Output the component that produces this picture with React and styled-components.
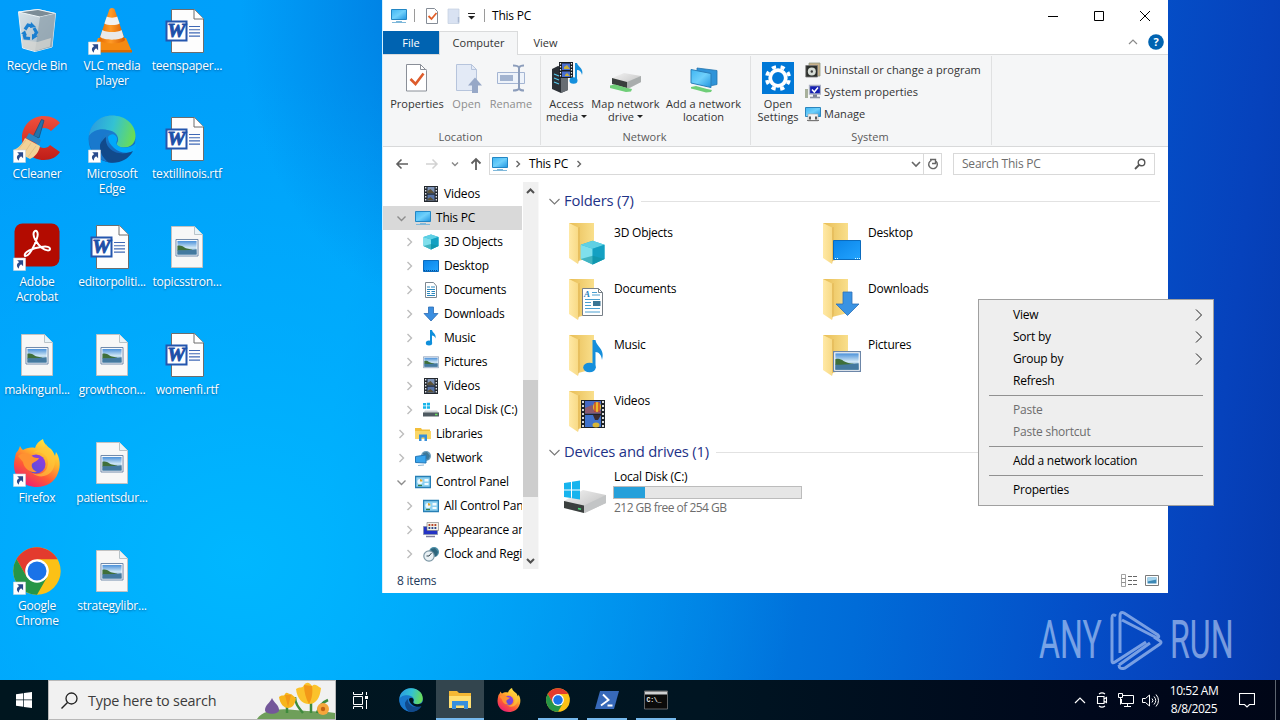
import styled, { createGlobalStyle, css } from "styled-components"

const GlobalStyle = createGlobalStyle`
  * { box-sizing: border-box; }
  body {
    margin: 0;
    overflow: hidden;
    font-family: "Open Sans", "Noto Sans", sans-serif;
    font-size: 12px;
    letter-spacing: -.22px;
    color: #000;
  }
  svg { display: block; flex: none; }
`;

const Screen = styled.div`
  position: relative;
  display: flex;
  flex-direction: column;
  width: 1280px;
  height: 720px;
  overflow: hidden;
  background:
    radial-gradient(ellipse 190px 300px at 430px 0, rgba(0,95,205,.6), rgba(0,110,220,0) 100%),
    radial-gradient(ellipse 560px 480px at 240px 560px, rgba(0,184,255,.95), rgba(0,180,255,.55) 45%, rgba(0,170,255,0) 100%),
    linear-gradient(97deg, #009dfa 0%, #00a2fa 28%, #008bea 45%, #006cd8 68%, #044fc8 84%, #0642bc 93%, #0539ad 100%);
`;
const Desktop = styled.main`
  flex: 1;
  display: flex;
  min-height: 0;
`;

/* desktop shortcuts */
const IconGrid = styled.section`
  display: grid;
  grid-template-rows: repeat(6, 108px);
  grid-auto-columns: 75px;
  grid-auto-flow: column;
  align-content: start;
  width: 383px;
  margin-left: -1px;
`;
const Shortcut = styled.div`
  display: flex;
  flex-direction: column;
  align-items: center;
  padding-top: 7px;
`;
const ShortcutLabel = styled.span`
  margin-top: 3px;
  line-height: 15px;
  width: 75px;
  padding-left: 1px;
  text-align: center;
  color: #fff;
  text-shadow: 0 1px 2px rgba(0,40,90,.55);
`;

/* explorer window */
const Window = styled.section`
  display: flex;
  flex-direction: column;
  width: 786px;
  height: 593px;
  background: #fff;
  border-left: 1px solid #d5f0fd;
`;
const TitleBar = styled.header`
  display: flex;
  align-items: center;
  height: 31px;
  padding-left: 8px;
`;
const QuickSep = styled.i`
  width: 1px;
  height: 13px;
  background: #9a9a9a;
  margin: 0 ${(props) => props.$after}px 0 ${(props) => props.$before}px;
`;
const TitleText = styled.span`
  flex: 1;
`;
const Caption = styled.button`
  display: flex;
  align-items: center;
  justify-content: center;
  width: 46px;
  height: 30px;
  padding: 0 1px 0 0;
  border: 0;
  background: none;
`;
const TabRow = styled.nav`
  display: flex;
  height: 24px;
  border-bottom: 1px solid #dadbdc;
  font-size: 11px;
  letter-spacing: 0;
`;
const Tab = styled.span`
  display: flex;
  align-items: center;
  justify-content: center;
  width: ${(props) => props.$w}px;
  height: 24px;
  padding-bottom: 1px;
  color: #333;
  ${(props) => props.$file && css`
    background: #0063b1;
    color: #fff;
    height: 23px;
    padding-bottom: 0;
  `}
  ${(props) => props.$active && css`
    background: #f5f6f7;
    border: 1px solid #dadbdc;
    border-bottom: 0;
    padding-bottom: 2px;
  `}
`;
const TabTools = styled.div`
  margin-left: auto;
  display: flex;
  align-items: center;
  gap: 10px;
  padding: 0 4px 2px 0;
`;
const Ribbon = styled.div`
  display: flex;
  height: 92px;
  background: #f5f6f7;
  border-bottom: 1px solid #d8d9da;
  font-size: 11px;
  letter-spacing: .05px;
  color: #333;
`;
const Group = styled.div`
  display: flex;
  flex-direction: column;
  width: ${(props) => props.$w}px;
  height: 89px;
  margin-top: 1px;
  padding: 6px 0 0 ${(props) => props.$pad}px;
  border-right: 1px solid #e0e1e2;
`;
const GroupBody = styled.div`
  display: flex;
  height: 68px;
`;
const GroupName = styled.span`
  line-height: 14px;
  text-align: center;
  color: #5a5a5a;
  margin-left: -${(props) => props.$pad + 2}px;
`;
const BigButton = styled.div`
  display: flex;
  flex-direction: column;
  align-items: center;
  width: ${(props) => props.$w}px;
  line-height: 13px;
  text-align: center;
  white-space: nowrap;
  color: ${(props) => (props.$off ? "#8d8d8d" : "#333")};
  svg { margin-bottom: 3px; }
`;
const SmallList = styled.div`
  margin: -3px 0 0 4px;
`;
const SmallButton = styled.div`
  display: flex;
  align-items: center;
  gap: 3px;
  height: 22px;
  padding-bottom: 1px;
  white-space: nowrap;
`;
const AddressRow = styled.div`
  display: flex;
  align-items: center;
  height: 35px;
  padding: 0 13px 1px 12px;
`;
const NavIcons = styled.div`
  display: flex;
  align-items: center;
  width: 94px;
`;
const AddressBox = styled.div`
  display: flex;
  align-items: center;
  width: 453px;
  height: 22px;
  padding-left: 2px;
  border: 1px solid #d9d9d9;
  span { margin: 0 7px; padding-bottom: 1px; }
`;
const Refresh = styled.div`
  display: flex;
  align-items: center;
  justify-content: center;
  width: 18px;
  height: 20px;
  border-left: 1px solid #d9d9d9;
`;
const SearchBox = styled.div`
  display: flex;
  align-items: center;
  justify-content: space-between;
  width: 202px;
  height: 22px;
  margin-left: 11px;
  padding: 0 8px 1px 8px;
  border: 1px solid #d9d9d9;
  color: #6d6d6d;
`;
const Body = styled.div`
  display: flex;
  height: 387px;
`;
const Tree = styled.ul`
  width: 139px;
  margin: 0;
  padding: 0;
  overflow: hidden;
  list-style: none;
`;
const TreeRow = styled.li`
  display: flex;
  align-items: center;
  height: 24px;
  padding-left: ${(props) => (props.$level ? 21 : 13)}px;
  white-space: nowrap;
  background: ${(props) => (props.$selected ? "#d9d9d9" : "none")};
  > svg:nth-child(2) { margin: 0 5px 0 9px; }
  > span { padding-bottom: 1px; }
`;
const ScrollTrack = styled.div`
  display: flex;
  flex-direction: column;
  align-items: center;
  width: 16px;
  margin-left: 1px;
  background: #f0f0f0;
  border-right: 1px solid #f8f8f8;
`;
const Thumb = styled.div`
  width: 15px;
  height: 117px;
  margin: 180px 0 58px;
  background: #cdcdcd;
`;
const Content = styled.div`
  flex: 1;
  padding: 8px 8px 0 10px;
`;
const SectionHead = styled.h2`
  display: flex;
  align-items: center;
  gap: 4px;
  height: 22px;
  margin: 0;
  font-size: 14.8px;
  letter-spacing: -.2px;
  font-weight: 400;
  color: #1e3287;
  white-space: nowrap;
  > span { padding-bottom: 2px; }
  &::after {
    content: "";
    flex: 1;
    height: 1px;
    margin-left: 3px;
    background: #e2e2e2;
  }
`;
const Tiles = styled.div`
  display: grid;
  grid-template-columns: 254px 254px;
  grid-auto-rows: 56px;
  padding: 7px 0 0 14px;
  margin-bottom: -2px;
`;
const Tile = styled.div`
  display: flex;
  gap: 3px;
  line-height: 16px;
  > span { margin-top: 6px; }
`;
const DriveInfo = styled.div`
  width: 189px;
  margin: -1px 0 0 -1px;
  p { margin: 0 1px; }
  p:last-child {
    color: #6d6d6d;
    letter-spacing: -.52px;
  }
`;
const Meter = styled.div`
  height: 13px;
  margin: 1px 0 1px;
  border: 1px solid #bcbcbc;
  background: #e6e6e6;
`;
const MeterFill = styled.div`
  height: 11px;
  background: #26a0da;
`;
const StatusBar = styled.footer`
  display: flex;
  align-items: center;
  height: 23px;
  padding: 0 9px 0 14px;
  color: #1e395b;
  gap: 8px;
  > span { flex: 1; }
`;

/* context menu */
const Menu = styled.div`
  position: absolute;
  left: 978px;
  top: 299px;
  width: 236px;
  padding: 4px 2px;
  background: #eee;
  border: 1px solid #a0a0a0;
`;
const MenuItem = styled.div`
  display: flex;
  align-items: center;
  justify-content: space-between;
  height: 22px;
  padding: 0 5px 0 32px;
  color: ${(props) => (props.$off ? "#6d6d6d" : "#000")};
  > span { padding-bottom: 1px; }
`;
const MenuLine = styled.hr`
  height: 1px;
  margin: 3px 8px;
  border: 0;
  background: #919191;
`;

/* watermark */
const Watermark = styled.div`
  position: absolute;
  left: 1039px;
  top: 608px;
  display: flex;
  align-items: center;
  height: 64px;
  opacity: .55;
  color: #d6e6ff;
`;
const Letters = styled.span`
  width: ${(props) => props.$w}px;
  font: 400 54px/66px Roboto, sans-serif;
  letter-spacing: 0;
  transform: scaleX(.595);
  transform-origin: 0 50%;
`;

/* taskbar */
const Taskbar = styled.footer`
  display: flex;
  height: 40px;
  background: linear-gradient(90deg, #00161f 0%, #001522 55%, #00081c 85%, #000617 100%);
  color: #fff;
`;
const Start = styled.div`
  display: flex;
  align-items: center;
  justify-content: center;
  width: 48px;
`;
const TaskSearch = styled.div`
  display: flex;
  align-items: center;
  width: 288px;
  border: 1px solid #b8b8b8;
  background: #f1f1f1;
  padding-left: 12px;
  overflow: hidden;
  color: #3c3c3c;
  font-size: 14.4px;
  > span { flex: 1; margin-left: 10px; white-space: nowrap; }
`;
const TaskApp = styled.div`
  display: flex;
  align-items: center;
  justify-content: center;
  width: 48px;
  margin-right: 1px;
  &:nth-child(3) { margin-right: 3px; }
  ${(props) => props.$running && css`
    background: linear-gradient(#76b9ed, #76b9ed) bottom / 40px 2px no-repeat;
  `}
  ${(props) => props.$active && css`
    background: linear-gradient(#76b9ed, #76b9ed) bottom / 48px 2px no-repeat, #33454e;
  `}
`;
const Tray = styled.div`
  display: flex;
  align-items: center;
  gap: 8px;
  margin-left: auto;
`;
const Clock = styled.time`
  width: 54px;
  margin: 0 10px 0 0;
  line-height: 18px;
  text-align: center;
  white-space: nowrap;
  font-size: 12px;
  letter-spacing: -.45px;
`;
const ShowDesktop = styled.i`
  width: 5px;
  height: 40px;
  margin-left: 12px;
  border-left: 1px solid #5d6570;
`;

const Svg = ({ s = 48, w = s, h = s, box = "0 0 48 48", children }) => (
  <svg width={w} height={h} viewBox={box} fill="none">{children}</svg>
)

const Gradients = () => (
  <svg width="0" height="0" style={{ position: "absolute" }}>
    <defs>
      <linearGradient id="screen" x1="0" y1="0" x2="1" y2="1">
        <stop offset="0" stopColor="#3fb5f2" /><stop offset=".5" stopColor="#6fd0fb" /><stop offset="1" stopColor="#1f94e0" />
      </linearGradient>
      <linearGradient id="desk" x1="0" y1="0" x2="1" y2="1">
        <stop offset="0" stopColor="#0a84e8" /><stop offset="1" stopColor="#22a4ff" />
      </linearGradient>
      <linearGradient id="folderBack" x1="0" y1="0" x2="1" y2="0">
        <stop offset="0" stopColor="#e8bd55" /><stop offset="1" stopColor="#f9df8c" />
      </linearGradient>
      <linearGradient id="folderFront" x1="0" y1="0" x2="1" y2="0">
        <stop offset="0" stopColor="#ffe9a6" /><stop offset="1" stopColor="#f8da86" />
      </linearGradient>
      <linearGradient id="sky" x1="0" y1="0" x2="0" y2="1">
        <stop offset="0" stopColor="#4a90d9" /><stop offset=".5" stopColor="#cfe6f5" /><stop offset="1" stopColor="#4d86ad" />
      </linearGradient>
      <linearGradient id="cone" x1="0" y1="0" x2="1" y2="0">
        <stop offset="0" stopColor="#e66a00" /><stop offset=".45" stopColor="#ff9a26" /><stop offset="1" stopColor="#d85c00" />
      </linearGradient>
      <linearGradient id="edgeGreen" x1="0" y1=".3" x2="1" y2=".5">
        <stop offset="0" stopColor="#2b9be0" /><stop offset=".5" stopColor="#33c2d3" /><stop offset="1" stopColor="#6bdd54" />
      </linearGradient>
      <linearGradient id="edgeBlue" x1="0" y1="0" x2="0" y2="1">
        <stop offset="0" stopColor="#2590d8" /><stop offset="1" stopColor="#0f5cb5" />
      </linearGradient>
      <linearGradient id="fox" x1=".8" y1="0" x2=".2" y2="1">
        <stop offset="0" stopColor="#fff04a" /><stop offset=".35" stopColor="#ffb52c" /><stop offset=".65" stopColor="#ff5a36" /><stop offset="1" stopColor="#e8177c" />
      </linearGradient>
      <linearGradient id="globe" x1="0" y1="1" x2="1" y2="0">
        <stop offset="0" stopColor="#4757d8" /><stop offset="1" stopColor="#9c37e0" />
      </linearGradient>
      <linearGradient id="bin" x1="0" y1="0" x2="1" y2="1">
        <stop offset="0" stopColor="#d9e4ea" /><stop offset="1" stopColor="#9fb0bb" />
      </linearGradient>
      <linearGradient id="ccred" x1="0" y1="0" x2="0" y2="1">
        <stop offset="0" stopColor="#f0503c" /><stop offset="1" stopColor="#c01d18" />
      </linearGradient>
      <linearGradient id="driveTop" x1="0" y1="0" x2="1" y2="1">
        <stop offset="0" stopColor="#f4f4f4" /><stop offset="1" stopColor="#b9b9b9" />
      </linearGradient>
    </defs>
  </svg>
)

const LinkArrow = () => (
  <g>
    <path d="M.5 35h12v12.500H.5z" fill="#fff" stroke="#c9d3dc" strokeWidth=".6" />
    <path d="M4.2 37.3h5.9v5.9l-2-2c-1.8 1.2-2.3 2.6-2.2 4.6-2.8-2.300-2.500-5 .3-6.500z" fill="#2b4b8c" />
  </g>
)
const Scene = ({ x, y, w, h }) => (
  <g transform={`translate(${x} ${y}) scale(${w / 24} ${h / 18})`}>
    <path d="M.5.5h23v17H.5z" fill="#fff" stroke="#6c86a8" />
    <path d="M2 2h20v14H2z" fill="url(#sky)" />
    <path d="M2 7c3-1 5 0 7 1.500s6 2 9 2.500l-4 1H2z" fill="#3f6f3a" />
    <path d="M2 11.500c5 .5 12 0 20-1V16H2z" fill="#44799f" />
  </g>
)

const RecycleBin = () => (
  <Svg>
    <path d="M5.500 5 25 2.500l17.500 4L39 40 22 44.500 9.500 41z" fill="url(#bin)" stroke="#e9f1f5" strokeWidth="1" />
    <path d="M5.500 5 25 2.500l17.500 4L27 10z" fill="#7c8c96" stroke="#eef5f8" />
    <path d="M27 10 42.500 6.500 39 40 22 44.500z" fill="#8fa2ae" fillOpacity=".75" />
    <path d="M8.500 33l16 2L38 31l-1 8.500-15 4.500-12-3.500z" fill="#e0ddd5" fillOpacity=".65" />
    <g stroke="#1b7fd0" strokeWidth="3.200">
      <path d="M12 22.500l3-4.500 4 1" /><path d="M21 21l2.500 4.500-2.500 4" /><path d="M17 31.500l-5-.5-1-4" />
    </g>
    <path d="M18 15l5 5-6 1zM25 29l-6 4v-6zM8 26.500l4-3 2 5z" fill="#1b7fd0" />
  </Svg>
)
const Vlc = () => (
  <Svg>
    <path d="M10 31h28l6 14H5z" fill="#f58a12" />
    <path d="M5 43h39v2.500H5z" fill="#d96a00" />
    <path d="M21.500 2q2.500-2 5 0L37 33c-3 4.500-23 4.500-26 0z" fill="url(#cone)" />
    <path d="M18.800 9.500c2 1.500 8.400 1.500 10.400 0l2.400 7c-3 2-12.200 2-15.200 0z" fill="#f1f1f1" />
    <path d="M14.400 23c4 2.800 15.200 2.800 19.200 0l2.200 7c-4 3.500-19.600 3.500-23.600 0z" fill="#e9e9e9" />
    <LinkArrow />
  </Svg>
)
const WordDoc = () => (
  <Svg>
    <path d="M8.500 2.500h23L40.500 12v33.500h-32z" fill="#fdfdfd" stroke="#6d6d6d" />
    <path d="M31 2.500V12h9.500" fill="#fff" stroke="#6d6d6d" />
    <path d="M26 19.500h11M26 22.700h11M26 25.900h11M26 29.100h11" stroke="#3f68b5" strokeWidth="1.100" />
    <path d="M3.500 14.500h20v19h-20z" fill="#fff" stroke="#2456ae" strokeWidth="2" />
    <text x="4.200" y="30" fontFamily="Liberation Serif, serif" fontSize="18" fontWeight="700" fontStyle="italic" fill="#1e4fa8" stroke="#1e4fa8" strokeWidth=".8" textLength="18" lengthAdjust="spacingAndGlyphs">W</text>
  </Svg>
)
const ImageDoc = () => (
  <Svg>
    <path d="M8.500 3.500h23l8 8v33h-31z" fill="#f7f7f7" stroke="#c2c2c2" />
    <path d="M31.500 3.500v8h8" fill="#e8f3f8" stroke="#b9c3c8" />
    <Scene x={12.500} y={16} w={23} h={17.500} />
  </Svg>
)
const CCleaner = () => (
  <Svg>
    <path d="M47 8C44 4 38 1 31 1 18 1 9 11 9 23s9 22 22 22c7 0 13-3 16-8l-10-7c-1 2-4 3-6 3-5 0-9-4-9-10s4-10 9-10c3 0 5 1 7 3z" fill="url(#ccred)" />
    <path d="M28.500 4.500 31 5.500 26 23 20.500 21z" fill="#2373ab" stroke="#1c4f7c" strokeWidth=".8" />
    <path d="M16 18l12 7-2 5-13-7z" fill="#2d86c4" />
    <path d="M12 23 27 31c-1 6-5 11-10 13L0 35c6-2 9-6 12-12z" fill="#f2d297" />
    <path d="M13 25 4 36M18 28l-8 12M23 31l-8 11" stroke="#e0bd80" strokeWidth=".8" />
    <LinkArrow />
  </Svg>
)
const EdgeArt = () => (
  <g>
    <circle cx="24" cy="24" r="23.500" fill="url(#edgeBlue)" />
    <path d="M1 21C2 9 12 .5 24 .5 37 .5 47.500 9 47.500 21c0 7-5 11.500-11.500 11.500-5 0-8-2-7-4.500 3-4 0-11-7-12.500C13 14 4 18 1 21z" fill="url(#edgeGreen)" />
    <path d="M18 22c-4 7-1 17 7 20 7 3 14 1 20-6-5 9-14 13-24 11.500C9 45 7 31 18 22z" fill="#114a8b" />
    <path d="M1 21C6 13 20 12 25 19c-8-4-13 4-13 12 0 7 3 12 8 16C8 44 0 33 1 21z" fill="#1979cd" />
  </g>
)
const Edge = ({ s = 48, link = true, back = "#00a8fb" }) => (
  <Svg s={s}>
    <EdgeArt />
    <path d="M20 22c2-3 5-3.500 7.500-1.500 2 2 2 4.500 1 6.500-1 3 3 5.500 8 5.500 5 0 9-1.500 12-5.500 0 3.500-1 7-2.500 9-6 3-15 2-20-3-4-3.500-6-7-6-11z" fill={back} />
    <path d="M18 22c-1 6 2 12 9 15 6 2.500 13 1.500 18-1-5 8-14 12-23 8-8-5-9-16-4-22z" fill="#114a8b" />
    {link && <LinkArrow />}
  </Svg>
)
const Acrobat = () => (
  <Svg>
    <rect x="1.500" y=".5" width="45" height="43" rx="8" fill="#b30b00" />
    <path d="M12 33c-2-4 8-8 16-9 6-1 9 0 9 2s-4 2-8-1c-5-4-10-12-8-16 2-3 5 0 3 6-2 7-8 19-12 18z" stroke="#fff" strokeWidth="2" strokeLinejoin="round" />
    <LinkArrow />
  </Svg>
)
const FoxArt = () => (
  <g>
    <path d="M3 14c2-2 3-4 4-7 1 2 2 3 3 4 3-2 8-3 12-2C23 5 26 2 30 0c1 5 4 7 8 10 2 2 3 5 4 7l1-4c4 6 5 14 2 21C42 43 33 48 24 48 11 48 1 39 1 26c0-4 1-8 2-12z" fill="url(#fox)" />
    <circle cx="23" cy="25" r="9.500" fill="url(#globe)" />
    <path d="M5 17c5-4 11-3 14 0 2 2 5 2 7 2-1 3-6 4-7 6-1 3 1 6 5 8-8 1-13-4-14-10z" fill="#ff9231" />
    <path d="M20 14c10-3 18 5 14 15-2 5-9 8-15 5 10 8 23 1 23-12 0-7-6-11-9-17-2 6-9 5-13 9z" fill="#ffc83b" fillOpacity=".65" />
  </g>
)
const Firefox = () => (<Svg><FoxArt /><LinkArrow /></Svg>)
const ChromeArt = () => (
  <g>
    <circle cx="24" cy="24" r="23.700" fill="#fbc116" />
    <path d="M24 12.200H44.500A23.700 23.700 0 0 0 3.500 12L13.800 30z" fill="#e33b2e" />
    <path d="M13.800 30 3.500 12A23.700 23.700 0 0 0 24 47.700L34.200 30z" fill="#269547" />
    <circle cx="24" cy="24" r="11.800" fill="#fff" />
    <circle cx="24" cy="24" r="9.500" fill="#1a73e8" />
  </g>
)
const Chrome = () => (<Svg><ChromeArt /><LinkArrow /></Svg>)

/* small icons, drawn on a 16px grid */
const art = {
  pc: <><path d="M.5 1.500h15v10H.5z" fill="url(#screen)" stroke="#2386c4" /><path d="M1 14.500h14M5 13.500h6" stroke="#7fb8da" /></>,
  film: <><path d="M1 0h14v16H1z" fill="#23282e" /><path d="M4.500 1h7v6.300h-7z" fill="#7d93b8" /><path d="M4.500 8.700h7V15h-7z" fill="#5673a8" /><path d="M4.500 5l3-2 4 4h-7zM4.500 13l3-2 4 3.500h-7z" fill="#5c5238" /><path d="M2.700 1v14M13.300 1v14" stroke="#e8edf2" strokeDasharray="1.500 1.500" strokeWidth="1.300" /></>,
  cube: <><path d="M8 .5 15.500 3v9L8 15.500.5 12V3z" fill="#28b8d5" /><path d="M.5 3 8 5.500v10L.5 12z" fill="#7fdfec" /><path d="M.5 3 8 .5 15.500 3 8 5.500z" fill="#5fd0e4" /><path d="M8 5.500 15.500 3v9L8 15.500z" fill="#14a0c2" /><path d="M.5 12 8 10l7.500 2L8 15.500z" fill="#0f8f9f" fillOpacity=".55" /></>,
  desktop: <><path d="M.5 2.500h15v11H.5z" fill="url(#desk)" stroke="#0b6bbd" /><path d="M1 12.500h14" stroke="#0a4f94" strokeDasharray="1 1" /></>,
  doc: <><path d="M2.500.5h8L13.500 4v11.500h-11z" fill="#fff" stroke="#7d8790" /><path d="M4 5h3M8 5h4M4 7.500h8M4 9.500h3M8.500 9.500H12M4 11.500h3M8.500 11.500H12M4 13.500h8" stroke="#2b87bd" /></>,
  down: <path d="M5.500 1h5v6.500H15L8 15 1 7.500h4.500z" fill="#3a8ee0" stroke="#2b6cb5" strokeWidth=".8" />,
  music: <><path d="M7 0h2c.5 3 4.500 3.500 3.500 8.500C12 6.500 10.500 5.500 9 5.500V13H7z" fill="#0f8fdb" /><ellipse cx="6" cy="13" rx="3.200" ry="2.500" fill="#0f8fdb" /></>,
  picture: <Scene x={0} y={2.500} w={16} h={11.500} />,
  disk: <><path d="M0 1h3v2.500H0zM3.800.8H7v2.700H3.800zM0 4.300h3v2.500H0zM3.800 4.300H7v2.500H3.800z" fill="#18b5ea" /><path d="M2 8.500h12l2 2.500H0z" fill="#cfd3d6" /><path d="M0 10.500h16v4H0z" fill="#4f5a61" /><path d="M12 12.500h2.500" stroke="#67e05c" strokeWidth="1.500" /></>,
  library: <><path d="M0 2h6l1 1.500h8V12H0z" fill="#f3bf3a" /><path d="M0 5h16v8H0z" fill="#fbd768" /><path d="M4 15V8.500h8V15h-2.500v-3.500h-3V15z" fill="#3a8fd8" /></>,
  network: <><circle cx="11" cy="6" r="5" fill="#6a9dbc" /><path d="M8 3l4-1 3 4-2 4-4-3z" fill="#3f7896" /><path d="M.5 6.500 11 5v8L.5 12.500z" fill="#38a4ec" stroke="#2377b8" /><path d="M3 15.500l6-.5" stroke="#8ab5d4" /></>,
  control: <><path d="M.5 2.500h15v11H.5z" fill="#8ed2f2" stroke="#277fb5" strokeWidth="1.500" /><circle cx="5" cy="7.500" r="2.600" fill="#eef8fd" /><path d="M5 7.500V5a2.500 2.500 0 0 1 2.500 2.500z" fill="#e0a62e" /><path d="M9.500 5h4v2.500h-4zM9.500 9h4v2h-4z" fill="#f2fafd" /><path d="M3 11.500h4" stroke="#3a7c40" strokeWidth="1.300" /></>,
  appearance: <><path d="M.5 4.500h14v8H.5z" fill="#2433c4" stroke="#8a93b5" /><path d="M4 .5h11.500v8H4z" fill="#f4f2e8" stroke="#777" strokeWidth=".6" /><path d="M5.500 3h9" stroke="#b3452a" strokeWidth="1.800" strokeDasharray="1.800 1.200" /><path d="M5.500 6h9" stroke="#2c4a8c" strokeWidth="1.800" strokeDasharray="1.800 1.200" /><path d="M3 14.500h9" stroke="#7d7d9d" strokeWidth="1.500" /></>,
  clock: <><circle cx="11" cy="6" r="5" fill="#4a8da6" /><path d="M8 3l4-1 3 4-2 5-4-4z" fill="#2e657c" /><circle cx="6" cy="10" r="5.200" fill="#e9f1f5" stroke="#7d97a5" strokeWidth="1.200" /><path d="M6 10l2.500-3M6 10H3.500" stroke="#33444f" /></>,
  check: <><path d="M2.500.5h8l3 3v12h-11z" fill="#fff" stroke="#858c96" /><path d="M4.500 8l3 3L12.500 5" stroke="#e0602a" strokeWidth="1.800" /></>,
  blank: <><path d="M2 1h11v14.500H2z" fill="#d9e2f2" stroke="#c3cee0" strokeWidth=".7" /><path d="M12.500 9v5.500" stroke="#aab8d2" strokeWidth="1.500" /></>,
  program: <><path d="M4 1h11v13H4z" fill="#c9b18a" stroke="#8f9a86" strokeWidth=".8" /><path d="M.8 3.500h11.700V15H.8z" fill="#2c2f2c" stroke="#777" strokeWidth=".8" /><circle cx="6.800" cy="9.500" r="4" fill="#d6dcd6" /><circle cx="6.800" cy="9.500" r="1.200" fill="#3b3b3b" /></>,
  sysprops: <><path d="M4.500 1.500h11v8.500h-11z" fill="#1520b0" stroke="#aab0c4" strokeWidth="1.300" /><path d="M7 5.500l2.300 2.500L13 3.500" stroke="#fff" strokeWidth="1.500" /><path d="M0 5h3v9H0z" fill="#a7b09b" /><path d="M8 10.500h4v3H8z" fill="#7b8294" /><path d="M5 13.500h10" stroke="#8c93a3" strokeWidth="1.600" /></>,
  manage: <><path d="M.5 1.500h15v9H.5z" fill="url(#screen)" stroke="#2b85bd" /><path d="M3 8h10v7H3z" fill="#f3f3f3" stroke="#a5a5a5" strokeWidth=".6" /><path d="M5 10.500v3M11 10.500v3" stroke="#2b2b2b" strokeWidth="1.500" /><path d="M2 14.500h12" stroke="#777" /></>,
}
const Small = ({ name, s = 16 }) => <Svg s={s} box="0 0 16 16">{art[name]}</Svg>

const ShapePath = ({ d, w = 10, h = w, c = "#555", sw = 1.2 }) => (
  <Svg w={w} h={h} box={`0 0 ${w} ${h}`}><path d={d} stroke={c} strokeWidth={sw} /></Svg>
)
const Caret = () => (
  <svg width="6" height="3" viewBox="0 0 6 3" style={{ display: "inline-block", margin: "0 0 3px 3px" }}><path d="M0 0h6L3 3z" fill="#222" /></svg>
)

const FolderArt = ({ children }) => (
  <Svg>
    <path d="M6 4h25v34L15 42z" fill="url(#folderBack)" />
    <path d="M6 4l9 4.500V45l-9-6z" fill="url(#folderFront)" />
    <path d="M15 8.500 17 8v31l-2 6z" fill="#e3b856" fillOpacity=".6" />
    {children}
  </Svg>
)
const folders = [
  ["3D Objects", <g transform="translate(17 21) scale(1.58)">{art.cube}</g>],
  ["Desktop", <><path d="M16.500 21.500h27v19h-27z" fill="url(#desk)" stroke="#0b6bbd" /><path d="M18 39.500h3M38 39.500h5" stroke="#dff" strokeDasharray="1 1" /></>],
  ["Documents", <><path d="M19.500 13.500h16l4 4v23h-20z" fill="#fff" stroke="#777f87" /><path d="M35.500 13.500v4h4" stroke="#777f87" /><text x="21" y="22" fontSize="9" fontFamily="Liberation Serif, serif" fontWeight="700" fontStyle="italic" fill="#2381bd">A</text><path d="M29 17.500h5M29 20h8M22 24.500h15M22 27.500h6M22 30.500h6M22 33.500h15M22 37h15" stroke="#4a9fd0" /><path d="M30 26h7.500v5H30z" fill="#3a7594" /></>],
  ["Downloads", <path d="M26 17h9v12h7L30.500 40.500 19 29h7z" fill="#3a93e3" stroke="#2e70b6" strokeWidth=".8" />],
  ["Music", <><path d="M29.500 9h3c1 7 10 9 6.500 20-.5-5-3-8-6.500-8v16h-3z" fill="#168fdb" /><ellipse cx="26.500" cy="36.500" rx="6.300" ry="4.800" fill="#168fdb" /></>],
  ["Pictures", <Scene x={16} y={20} w={28} h={21} />],
  ["Videos", <g><path d="M18 13h24v28H18z" fill="#1d2228" /><path d="M22 14h16v12.500H22z" fill="#4668c4" /><path d="M22 28h16v12H22z" fill="#3f72cc" /><path d="M22 21l7-3 9 6v2.500H22z" fill="#8b5a6e" /><ellipse cx="34" cy="20" rx="4" ry="5" fill="#e9b92c" /><path d="M32 15v10M36 15v10" stroke="#c22f2a" strokeWidth="1.200" /><path d="M30 28l8 0-3 5h-3z" fill="#3b2c30" /><ellipse cx="33" cy="38" rx="3.500" ry="2.500" fill="#d6b637" /><path d="M20 14v26M40 14v26" stroke="#f0f0f0" strokeWidth="1.800" strokeDasharray="2 2" /></g>],
]

const shortcuts = [
  ["Recycle Bin", RecycleBin], ["CCleaner", CCleaner], ["Adobe\nAcrobat", Acrobat],
  ["makingunl...", ImageDoc], ["Firefox", Firefox], ["Google\nChrome", Chrome],
  ["VLC media\nplayer", Vlc], ["Microsoft\nEdge", Edge], ["editorpoliti...", WordDoc],
  ["growthcon...", ImageDoc], ["patientsdur...", ImageDoc], ["strategylibr...", ImageDoc],
  ["teenspaper...", WordDoc], ["textillinois.rtf", WordDoc], ["topicsstron...", ImageDoc],
  ["womenfi.rtf", WordDoc],
]

const tree = [
  ["Videos", "film", 1, "none"], ["This PC", "pc", 0, "open"], ["3D Objects", "cube", 1],
  ["Desktop", "desktop", 1], ["Documents", "doc", 1], ["Downloads", "down", 1],
  ["Music", "music", 1], ["Pictures", "picture", 1], ["Videos", "film", 1],
  ["Local Disk (C:)", "disk", 1], ["Libraries", "library", 0], ["Network", "network", 0],
  ["Control Panel", "control", 0, "open"], ["All Control Panel Items", "control", 1],
  ["Appearance and Personalization", "appearance", 1], ["Clock and Region", "clock", 1],
]
const arrows = {
  none: ["", "none"],
  open: ["M1.500 3.500l4 4 4-4", "#8d8d8d"],
  closed: ["M3.500 1l4 4-4 4", "#bdbdbd"],
}

const menu = [
  ["View", "sub"], ["Sort by", "sub"], ["Group by", "sub"], ["Refresh"], null,
  ["Paste", "off"], ["Paste shortcut", "off"], null,
  ["Add a network location"], null, ["Properties"],
]

function RibbonBar() {
  return (
    <Ribbon>
      <Group $w={158} $pad={5}>
        <GroupBody>
          <BigButton $w={58}>
            <Svg s={32} box="0 0 32 32"><path d="M5.500 2.500h14l6 6v20.500h-20z" fill="#fff" stroke="#8a8f98" /><path d="M19.500 2.500v5h6" stroke="#8a8f98" /><path d="M9.500 17l5 5 8-10.500" stroke="#dd5c2c" strokeWidth="2.600" /></Svg>
            Properties
          </BigButton>
          <BigButton $w={41} $off>
            <Svg s={32} box="0 0 32 32"><path d="M5.500 2.500h15l5 5v21h-20z" fill="#e3eaf6" stroke="#b6c4dc" /><path d="M20.500 2.500v5h5" stroke="#b6c4dc" /><path d="M24 15.500l7 8h-4V31h-6v-7.500h-4z" fill="#97a8c7" /></Svg>
            Open
          </BigButton>
          <BigButton $w={48} $off>
            <Svg s={32} box="0 0 32 32"><path d="M2.500 10.500h27v11h-27z" fill="#eef3fa" stroke="#a4b5d3" /><path d="M5 13h13v6H5z" fill="#a3b4d0" /><path d="M18 3.500c3 0 5 0 6 2 1-2 3-2 5-2M24 5.500v21M18 28.500c3 0 5 0 6-2 1 2 3 2 5 2" stroke="#8c9dbb" strokeWidth="2" /></Svg>
            Rename
          </BigButton>
        </GroupBody>
        <GroupName $pad={5}>Location</GroupName>
      </Group>
      <Group $w={210} $pad={2}>
        <GroupBody>
          <BigButton $w={47}>
            <Svg s={32} box="0 0 32 32"><path d="M1 7l6-3 10 3v21l-7 3-9-4z" fill="#2b3036" /><path d="M10 10l7-3v21l-7 3z" fill="#676d73" /><path d="M3 12l5 2M3 16l5 2M3 20l5 2" stroke="#57c9ee" strokeWidth="1.200" /><path d="M8 0h14v16H8z" fill="#171b22" /><path d="M11 1.500h8V8h-8zM11 9.500h8V15h-8z" fill="#4b6fd0" /><path d="M13 5l3-2 3 4h-6zM14 13l2-2 3 3h-5z" fill="#c9b03c" /><path d="M9.500 1v14M20.500 1v14" stroke="#eee" strokeDasharray="1.500 1.500" strokeWidth="1.200" /><path d="M24 1h2c1 4 7 5 5 12-.5-3-2-5-5-5v10h-2z" fill="#148fdd" /><ellipse cx="22.500" cy="18.500" rx="4" ry="3.200" fill="#148fdd" /></Svg>
            <span>Access<br />media<Caret /></span>
          </BigButton>
          <BigButton $w={71}>
            <Svg s={32} box="0 0 32 32"><path d="M2 16 14 11l17 3v6L18 27 2 22z" fill="url(#driveTop)" /><path d="M2 16l15 4v6L2 22z" fill="#3a3f3d" /><path d="M17 20l14-6v6l-14 7z" fill="#a9adad" /><path d="M0 23.500l5-1 12 3.500 5 1-1 2.500-5 .5-12-3-4-1z" fill="#6fce78" /></Svg>
            <span>Map network<br />drive<Caret /></span>
          </BigButton>
          <BigButton $w={85}>
            <Svg s={32} box="0 0 32 32"><path d="M9 6l20 2.500v14l-5 1L9 20z" fill="#2f93d8" stroke="#2374ad" strokeWidth=".8" /><path d="M3 7.500l20 4v14L3 21z" fill="url(#screen)" stroke="#2b7eb8" /><path d="M3 25l5-1 11 3 5 1-1 2-5 .5-11-3-4-1z" fill="#6fce78" /></Svg>
            <span>Add a network<br />location</span>
          </BigButton>
        </GroupBody>
        <GroupName $pad={2}>Network</GroupName>
      </Group>
      <Group $w={241} $pad={4}>
        <GroupBody>
          <BigButton $w={46}>
            <Svg s={32} box="0 0 32 32"><path d="M0 0h32v32H0z" fill="#0078d7" /><circle cx="16" cy="16" r="7.800" stroke="#fff" strokeWidth="3.800" /><circle cx="16" cy="16" r="11.300" stroke="#fff" strokeWidth="3.500" strokeDasharray="4.200 4.675" strokeDashoffset="-2.300" /></Svg>
            <span>Open<br />Settings</span>
          </BigButton>
          <SmallList>
            <SmallButton><Small name="program" />Uninstall or change a program</SmallButton>
            <SmallButton><Small name="sysprops" />System properties</SmallButton>
            <SmallButton><Small name="manage" />Manage</SmallButton>
          </SmallList>
        </GroupBody>
        <GroupName $pad={4}>System</GroupName>
      </Group>
    </Ribbon>
  )
}

function Explorer() {
  return (
    <Window>
      <TitleBar>
        <Small name="pc" />
        <QuickSep $before={7} $after={9} />
        <Small name="check" />
        <span style={{ width: 6 }} />
        <Small name="blank" />
        <span style={{ width: 5 }} />
        <Svg w={9} h={8} box="0 0 9 8"><path d="M1 1.500h7" stroke="#222" /><path d="M1 4h7L4.500 7.500z" fill="#222" /></Svg>
        <QuickSep $before={8} $after={7} />
        <TitleText>This PC</TitleText>
        <Caption><ShapePath w={10} d="M0 5.500h10" c="#000" sw={1} /></Caption>
        <Caption><ShapePath w={10} d="M.5.5h9v9h-9z" c="#000" sw={1} /></Caption>
        <Caption><ShapePath w={10} d="M0 0l10 10M10 0L0 10" c="#000" sw={1} /></Caption>
      </TitleBar>
      <TabRow>
        <Tab $w={56} $file>File</Tab>
        <Tab $w={79} $active>Computer</Tab>
        <Tab $w={55}>View</Tab>
        <TabTools>
          <ShapePath w={10} d="M1 7l4-4 4 4" c="#8a8a8a" />
          <Svg s={16} box="0 0 16 16"><circle cx="8" cy="8" r="7.800" fill="#0063b1" /><text x="8" y="12" textAnchor="middle" fontSize="11" fontWeight="700" fill="#fff">?</text></Svg>
        </TabTools>
      </TabRow>
      <RibbonBar />
      <AddressRow>
        <NavIcons>
          <ShapePath w={14} d="M13 7H2M6.500 2.500L2 7l4.500 4.500" c="#5f5f5f" sw={1.6} />
          <span style={{ width: 16 }} />
          <ShapePath w={14} d="M1 7h11M7.500 2.500L12 7l-4.500 4.500" c="#d2d2d2" sw={1.5} />
          <span style={{ width: 12 }} />
          <ShapePath w={8} d="M1 2.500l3 3 3-3" c="#888" sw={1.4} />
          <span style={{ width: 10 }} />
          <ShapePath w={14} d="M7 13V2M2.500 6.500L7 2l4.500 4.500" c="#5f5f5f" sw={1.8} />
        </NavIcons>
        <AddressBox>
          <Small name="pc" />
          <span style={{ width: 0, margin: 3 }} />
          <ShapePath w={8} d="M2.500 1l3 3-3 3" c="#666" sw={1.4} />
          <span>This PC</span>
          <ShapePath w={8} d="M2.500 1l3 3-3 3" c="#666" sw={1.4} />
          <span style={{ flex: 1 }} />
          <ShapePath w={10} d="M1 3l4 4 4-4" c="#666" sw={1.6} />
          <span style={{ margin: 1 }} />
          <Refresh><ShapePath w={12} d="M9.200 3.400A4.300 4.300 0 1 1 4.500 2.300M5 5.500h3.500V1.500H3" c="#666" sw={1.4} /></Refresh>
        </AddressBox>
        <SearchBox>
          Search This PC
          <Svg s={12} box="0 0 12 12"><circle cx="7.500" cy="4.500" r="3.300" stroke="#555" strokeWidth="1.400" /><path d="M5 7L1 11" stroke="#555" strokeWidth="1.800" /></Svg>
        </SearchBox>
      </AddressRow>
      <Body>
        <Tree>
          {tree.map(([name, icon, level, state = "closed"], i) => (
            <TreeRow key={i} $level={level} $selected={i === 1}>
              <ShapePath w={10} d={arrows[state][0]} c={arrows[state][1]} sw={1.4} />
              <Small name={icon} />
              <span>{name}</span>
            </TreeRow>
          ))}
        </Tree>
        <ScrollTrack>
          <Svg w={9} h={18} box="0 0 9 18"><path d="M1 11l3.500-3.500L8 11" stroke="#505050" strokeWidth="2" /></Svg>
          <Thumb />
          <Svg w={9} h={12} box="0 0 9 12"><path d="M1 4l3.500 3.500L8 4" stroke="#505050" strokeWidth="2" /></Svg>
        </ScrollTrack>
        <Content>
          <SectionHead><ShapePath w={11} d="M.5 3l5 5 5-5" c="#777" sw={1.1} /><span>Folders (7)</span></SectionHead>
          <Tiles>
            {folders.map(([name, overlay]) => (
              <Tile key={name}><FolderArt>{overlay}</FolderArt><span>{name}</span></Tile>
            ))}
          </Tiles>
          <SectionHead><ShapePath w={11} d="M.5 3l5 5 5-5" c="#777" sw={1.1} /><span>Devices and drives (1)</span></SectionHead>
          <Tiles>
            <Tile>
              <Svg>
                <path d="M1 31 20 20l23 5v8L22 43 1 38z" fill="url(#driveTop)" />
                <path d="M1 31l20 4.500V43L1 38z" fill="#3b403f" />
                <path d="M21 35.500 43 25v8L21 43z" fill="#c3c5c6" />
                <path d="M15 38.500l3 .8" stroke="#4be07a" strokeWidth="1.500" />
                <path d="M1 13l7-1v7.500H1zM9 11.800l8-1.200v8.900H9zM1 20.500h7V28l-7-1zM9 20.500h8v8.900l-8-1.200z" fill="#16b4ee" />
              </Svg>
              <DriveInfo>
                <p>Local Disk (C:)</p>
                <Meter><MeterFill style={{ width: `${(42 / 254) * 100}%` }} /></Meter>
                <p>212 GB free of 254 GB</p>
              </DriveInfo>
            </Tile>
          </Tiles>
        </Content>
      </Body>
      <StatusBar>
        <span>8 items</span>
        <Svg w={16} h={13} box="0 0 16 13"><path d="M.5.500h4v4h-4zM.5 4.500h4v4h-4zM.5 8.500h4v4h-4z" stroke="#8b8b8b" strokeWidth=".8" /><path d="M7 2.500h9M7 6.500h9M7 10.500h9" stroke="#666" strokeDasharray="4 1" /></Svg>
        <Svg w={14} h={11} box="0 0 14 11"><path d="M.5.500h13v10H.5z" fill="#fff" stroke="#7a7a7a" /><path d="M2.500 2.500h9v6h-9z" fill="#3c88b5" /><path d="M2.500 2.500h9v2l-9 2z" fill="#a7d5ee" /></Svg>
      </StatusBar>
    </Window>
  )
}

const Flowers = () => (
  <Svg w={80} h={38} box="0 0 80 38">
    <path d="M2 38c6-9 22-11 38-9s32 1 40 3v6z" fill="#6f9f5a" />
    <path d="M32 32V18M56 32V12M48 32c-5-6-8-10-8-16M62 32c2-7 6-11 11-13" stroke="#3e8a3c" strokeWidth="2.500" />
    <path d="M17 17c-2 5-7 7-7 12 0 5 14 5 14 0 0-5-5-7-7-12z" fill="#74579a" />
    <path d="M24 16c3-3 5 0 6-3 2-3 4 1 6 0l5 4c-1 7-4 10-8 10s-8-4-9-11z" fill="#f7b51c" />
    <path d="M41 8c4-3 6 0 8-4 3-4 6-2 8 1 3-3 5 0 9 2-1 10-5 16-12 16S42 17 41 8z" fill="#fbc22b" />
    <path d="M49 4c0 7 2 14 5 19 3-5 4-12 3-18zM30 14l3 12 3-12z" fill="#f39818" />
    <circle cx="68" cy="28" r="6" fill="#f6a63b" /><circle cx="68" cy="28" r="2.200" fill="#c26315" />
  </Svg>
)

function TaskbarRow() {
  return (
    <Taskbar>
      <Start><Svg s={16} box="0 0 16 16"><path d="M0 2.200 7.300 1.200v6.300H0zM8 1.100 16 0v7.500H8zM0 8.300h7.300v6.400L0 13.700zM8 8.300h8V16l-8-1.100z" fill="#fff" /></Svg></Start>
      <TaskSearch>
        <Svg s={17} box="0 0 17 17"><circle cx="10.500" cy="6.500" r="5.500" stroke="#222" strokeWidth="1.300" /><path d="M6.500 10.500L.5 16.500" stroke="#222" strokeWidth="1.400" /></Svg>
        <span>Type here to search</span>
        <Flowers />
      </TaskSearch>
      <TaskApp><Svg s={17} box="0 0 17 17"><path d="M1.500 4.500h9v8h-9zM1.500 0v2.500h9V0M1.500 17v-2.500h9V17M14.500 0v3M14.500 8v9" stroke="#fff" /><path d="M13 4h3v3h-3z" fill="#fff" /></Svg></TaskApp>
      <TaskApp><Edge s={24} link={false} back="#00161f" /></TaskApp>
      <TaskApp $active><Svg s={24} box="0 0 24 24"><path d="M1 3h8l2 2h12v15H1z" fill="#f4b834" /><path d="M1 8h22v12H1z" fill="#ffdf72" /><path d="M4 21v-8h16v8h-4v-3.500H8V21z" fill="#378fdc" /></Svg></TaskApp>
      <TaskApp><Svg s={24}><FoxArt /></Svg></TaskApp>
      <TaskApp $running><Svg s={24}><ChromeArt /></Svg></TaskApp>
      <TaskApp $running><Svg s={24} box="0 0 24 24"><path d="M5 3h19l-5 18H0z" fill="#3769b9" /><path d="M8 6.500l5.500 5.500L6 17.500M12.500 17.500h5" stroke="#fff" strokeWidth="1.900" /></Svg></TaskApp>
      <TaskApp $running><Svg s={24} box="0 0 24 24"><path d="M.5 3h23v18H.5z" fill="#0b0b0b" stroke="#8a8a8a" strokeWidth=".7" /><path d="M1 3.500h22v3H1z" fill="#cfd1d2" /><text x="2.500" y="14" fontFamily="Liberation Mono, monospace" fontSize="6.500" fontWeight="700" fill="#eee">C:\_</text></Svg></TaskApp>
      <Tray>
        <ShapePath w={12} d="M1 9l5-5 5 5" c="#fff" />
        <Svg s={16} box="0 0 16 16"><path d="M3.500 4.500h6.500v7H3.500zM10 7l2.500-1.500v5L10 9M5 2c2-1.500 4-1.500 6 0M5 14c2 1.500 4 1.500 6 0" stroke="#fff" strokeWidth="1.100" /></Svg>
        <Svg s={16} box="0 0 16 16"><path d="M5 3.500h10.500v8H3.500V7M9.500 11.500v3M6 14.500h7" stroke="#fff" /><path d="M.5 1.500h4v4h-4zM2.500 5.500v7" stroke="#fff" /></Svg>
        <Svg s={17} box="0 0 17 17"><path d="M.5 6.500h3L7.500 3v11L3.500 10.500h-3zM10 6.500q2 2 0 4M12 4.500q3.500 4 0 8M14 2.500q5 6 0 12" stroke="#fff" /></Svg>
        <Clock>10:52 AM<br />8/8/2025</Clock>
        <Svg s={16} box="0 0 16 16"><path d="M.5 1.500h15v11h-5L8 15l-2.500-2.500h-5z" stroke="#fff" strokeWidth="1.100" /></Svg>
        <ShowDesktop />
      </Tray>
    </Taskbar>
  )
}

function App() {
  return (
    <Screen>
      <GlobalStyle />
      <Gradients />
      <Desktop>
        <IconGrid>
          {shortcuts.map(([name, Icon]) => (
            <Shortcut key={name}>
              <Icon />
              <ShortcutLabel>{name}</ShortcutLabel>
            </Shortcut>
          ))}
        </IconGrid>
        <Explorer />
      </Desktop>
      <TaskbarRow />
      <Watermark>
        <Letters $w={67}>ANY</Letters>
        <Svg w={64} h={64} box="-1 0 64 64">
          <path d="M9 8q-4-3-4 2v43q0 3 3 1L39 34M13 45V8q0-5 4-3l34 22q2 2-1 3L15 12M12 57q0 5 6 3l35-24q2-2 0-3l-6-4M12 57l31-22" stroke="#d6e6ff" strokeWidth="3" strokeLinejoin="round" />
        </Svg>
        <Letters $w={64}>RUN</Letters>
      </Watermark>
      <Menu>
        {menu.map((item, i) => item
          ? (
            <MenuItem key={i} $off={item[1] === "off"}>
              <span>{item[0]}</span>
              {item[1] === "sub" && <ShapePath w={14} d="M4 1.500L9.500 7 4 12.500" c="#222" sw={1} />}
            </MenuItem>
          )
          : <MenuLine key={i} />)}
      </Menu>
    </Screen>
  )
}

export default App
